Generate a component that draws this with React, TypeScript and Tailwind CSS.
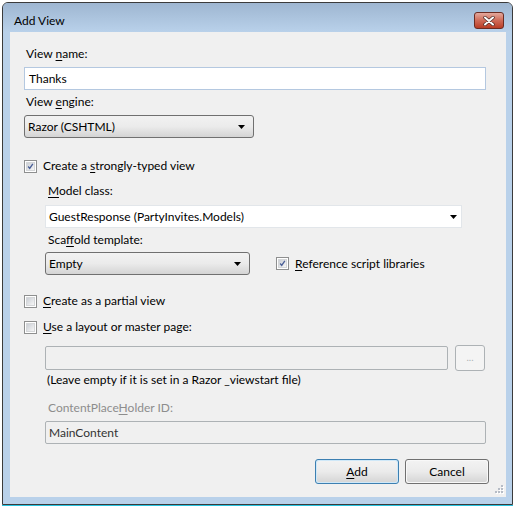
import React from 'react';

const font = { fontFamily: 'Lato, "Noto Sans", sans-serif' };

function Checkbox({ checked }: { checked?: boolean }) {
  return (
    <div className="w-[13px] h-[13px] border border-[#8e8f8f] bg-white p-[1px] shrink-0">
      <div className="w-full h-full border border-[#d4d6d8] bg-gradient-to-br from-[#cbcfd5] to-[#f6f6f6] flex items-center justify-center">
        {checked && (
          <svg width="9" height="9" viewBox="0 0 9 9">
            <path d="M1.5 4.5 L3.5 7 L7.5 1" fill="none" stroke="#4a5f97" strokeWidth="1.7" />
          </svg>
        )}
      </div>
    </div>
  );
}

function Arrow() {
  return (
    <svg width="7" height="4" viewBox="0 0 7 4" className="shrink-0">
      <path d="M0 0 H7 L3.5 4 Z" fill="#000" />
    </svg>
  );
}

function Dropdown({ value, width }: { value: string; width: string }) {
  return (
    <div className={`${width} h-[23px] rounded-[3px] border border-[#707070] bg-gradient-to-b from-[#f2f2f2] via-[#ebebeb] to-[#d4d4d4] flex items-center justify-between pl-[3px] pr-[8px]`}>
      <span>{value}</span>
      <Arrow />
    </div>
  );
}

function CheckRow({ label, access, checked, className = '' }: { label: string; access: number; checked?: boolean; className?: string }) {
  return (
    <div className={`flex items-center gap-[6px] h-[16px] ${className}`}>
      <Checkbox checked={checked} />
      <span>
        {label.slice(0, access)}
        <span className="underline underline-offset-2">{label[access]}</span>
        {label.slice(access + 1)}
      </span>
    </div>
  );
}

function Label({ pre, key1, post, className = '' }: { pre: string; key1: string; post: string; className?: string }) {
  return (
    <div className={`h-[16px] leading-[16px] ${className}`}>
      {pre}
      <span className="underline underline-offset-2">{key1}</span>
      {post}
    </div>
  );
}

export default function App() {
  return (
    <div className="w-[515px] h-[508px] bg-white text-[12px] text-black" style={font}>
      <div className="ml-[2px] mt-[2px] w-[511px] h-[503px] border border-[#3b3b3b] rounded-t-[6px] bg-[#b9d1ea] flex flex-col overflow-hidden">
        <div className="h-[29px] shrink-0 bg-gradient-to-b from-[#9eb6d1] to-[#b9d1ea] flex items-start justify-between pl-[11px] pr-[8px]">
          <span className="mt-[10px] leading-[16px] text-[12px]">Add View</span>
          <div className="mt-[9px] w-[30px] h-[17px] rounded-[3px] border border-[#6b2c23] bg-gradient-to-b from-[#e3a89d] via-[#cf6a57] to-[#b93c24] flex items-center justify-center">
            <svg width="12" height="10" viewBox="0 0 12 10">
              <path d="M2 1.5 L10 8.5 M10 1.5 L2 8.5" stroke="#4a2a25" strokeWidth="3.4" strokeLinecap="round" />
              <path d="M2 1.5 L10 8.5 M10 1.5 L2 8.5" stroke="#ffffff" strokeWidth="2" strokeLinecap="round" />
            </svg>
          </div>
        </div>
        <div className="relative flex-1 ml-[7px] mr-[6px] mb-[7px] bg-[#f0f0f0] pl-[14px] pt-[14px] flex flex-col">
          <Label pre="View " key1="n" post="ame:" className="pl-[2px]" />
          <div className="mt-[5px] w-[462px] h-[23px] border border-[#b4c8e0] bg-white flex items-center pl-[4px]">Thanks</div>
          <Label pre="View " key1="e" post="ngine:" className="mt-[4px] pl-[2px]" />
          <div className="mt-[5px]">
            <Dropdown value="Razor (CSHTML)" width="w-[230px]" />
          </div>
          <CheckRow label="Create a strongly-typed view" access={9} checked className="mt-[20px]" />
          <div className="ml-[21px] flex flex-col">
            <Label pre="" key1="M" post="odel class:" className="mt-[9px] pl-[3px]" />
            <div className="mt-[6px] w-[417px] h-[23px] border border-[#e2e6ea] bg-white flex items-center justify-between pl-[3px] pr-[4px]">
              <span>GuestResponse (PartyInvites.Models)</span>
              <Arrow />
            </div>
            <Label pre="Sca" key1="f" post="fold template:" className="mt-[4px] pl-[3px]" />
            <div className="mt-[4px] flex items-center gap-[26px]">
              <Dropdown value="Empty" width="w-[205px]" />
              <CheckRow label="Reference script libraries" access={0} checked />
            </div>
          </div>
          <CheckRow label="Create as a partial view" access={0} className="mt-[18px]" />
          <CheckRow label="Use a layout or master page:" access={0} className="mt-[10px]" />
          <div className="ml-[21px] flex flex-col">
            <div className="mt-[10px] flex items-center gap-[7px] h-[26px]">
              <div className="w-[403px] h-[24px] border border-[#adb2b5] rounded-[2px] bg-[#f0f0f0]" />
              <div className="w-[30px] h-[26px] border border-[#adb2b5] rounded-[3px] bg-[#f4f4f4] flex items-center justify-center text-[#adb2b5] text-[10px] pb-[2px]">...</div>
            </div>
            <div className="mt-[1px] h-[16px] leading-[16px] pl-[2px]">(Leave empty if it is set in a Razor _viewstart file)</div>
            <Label pre="ContentPlace" key1="H" post="older ID:" className="mt-[12px] pl-[3px] text-[#8d8d8d]" />
            <div className="mt-[5px] w-[441px] h-[23px] border border-[#adb2b5] rounded-[2px] bg-[#f0f0f0] flex items-center pl-[3px] text-[#333]">MainContent</div>
          </div>
          <div className="mt-[15px] w-[465px] flex justify-end gap-[6px]">
            <div className="w-[84px] h-[25px] rounded-[3px] border border-[#3c7fb1] p-[1px] bg-[#cfe8f8]">
              <div className="w-full h-full rounded-[2px] bg-gradient-to-b from-[#f2f2f2] via-[#ebebeb] to-[#d6d6d6] flex items-center justify-center">
                <span><span className="underline underline-offset-2">A</span>dd</span>
              </div>
            </div>
            <div className="w-[84px] h-[25px] rounded-[3px] border border-[#707070] p-[1px] bg-[#f8f8f8]">
              <div className="w-full h-full rounded-[2px] bg-gradient-to-b from-[#f2f2f2] via-[#ebebeb] to-[#d6d6d6] flex items-center justify-center">Cancel</div>
            </div>
          </div>
          <svg className="absolute right-[2px] bottom-[2px]" width="10" height="10" viewBox="0 0 10 10">
            {[[8, 0], [8, 3], [5, 3], [8, 6], [5, 6], [2, 6]].map(([x, y], i) => (
              <g key={i}>
                <rect x={x} y={y + 1} width="2" height="2" fill="#ffffff" />
                <rect x={x - 1} y={y} width="2" height="2" fill="#b6bcc6" />
              </g>
            ))}
          </svg>
        </div>
      </div>
      <div className="ml-[2px] w-[511px] h-[1px] bg-[#27c3e0]" />
    </div>
  );
}
